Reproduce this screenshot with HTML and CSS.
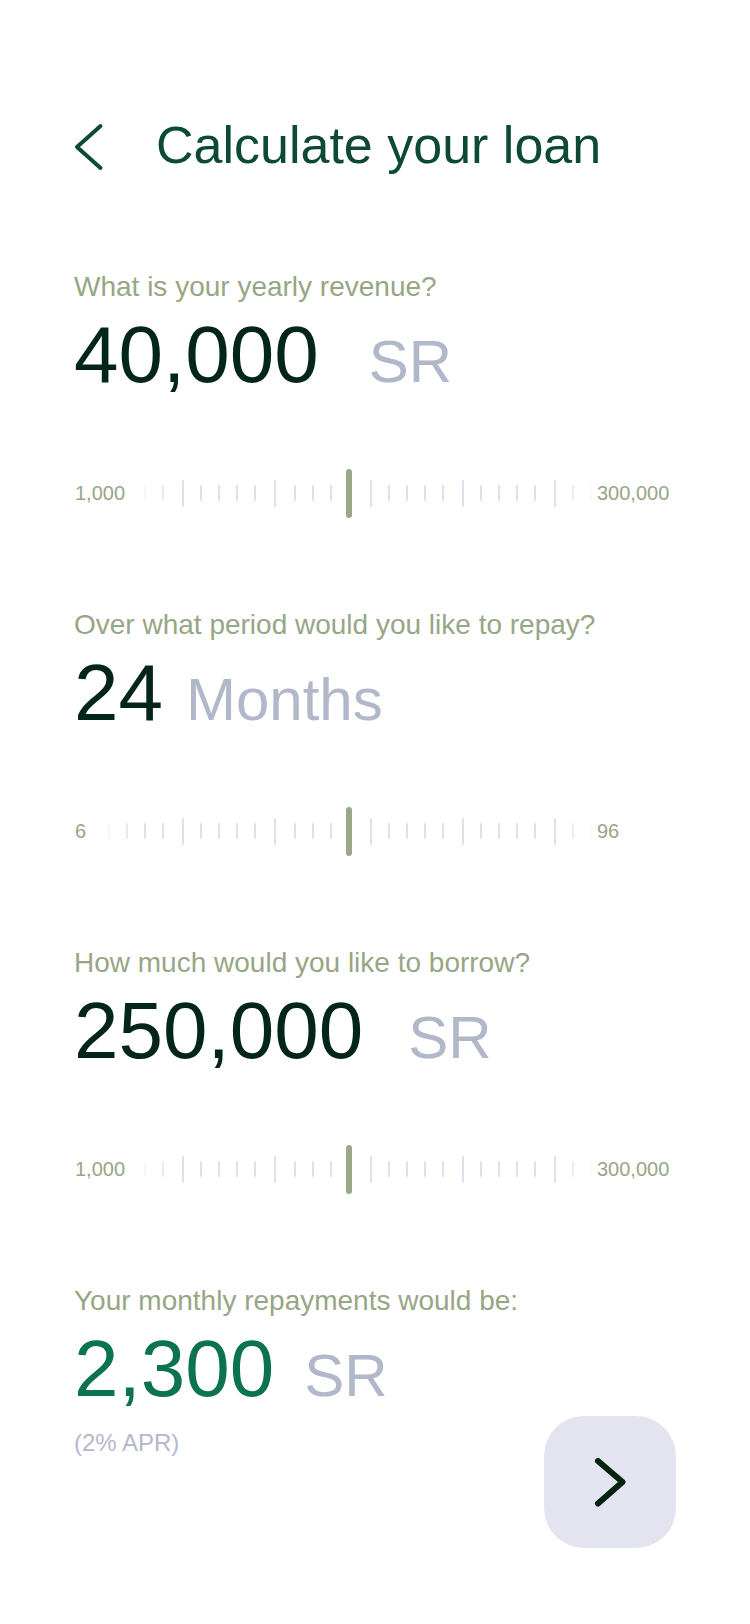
FILE: index.html
```html
<!DOCTYPE html>
<html lang="en">
<head>
<meta charset="utf-8">
<title>Calculate your loan</title>
<link rel="stylesheet" href="styles.css">
</head>
<body>
<main class="screen">
  <header class="header">
    <svg class="back" viewBox="0 0 30 48" aria-hidden="true">
      <path d="M26.5 3 L3 24 L26.5 45" fill="none" stroke="#0d4a33" stroke-width="4" stroke-linecap="round" stroke-linejoin="round"/>
    </svg>
    <h1 class="title">Calculate your loan</h1>
  </header>

  <div class="content">
    <section class="field">
      <p class="question">What is your yearly revenue?</p>
      <div class="value"><span class="amount">40,000</span><span class="unit unit--r1">SR</span></div>
      <div class="slider">
        <span class="slider-min">1,000</span>
        <div class="track">
          <i class="tick"></i><i class="tick"></i><i class="tick"></i><i class="tick"></i><i class="tick"></i><i class="tick"></i>
          <i class="tick tick--major"></i><i class="tick"></i><i class="tick"></i><i class="tick"></i><i class="tick"></i>
          <i class="tick tick--major"></i><i class="tick tick--wide"></i><i class="tick"></i><i class="tick"></i>
          <i class="thumb"></i>
          <i class="tick tick--major"></i><i class="tick"></i><i class="tick"></i><i class="tick"></i><i class="tick"></i>
          <i class="tick tick--major"></i><i class="tick"></i><i class="tick"></i><i class="tick"></i><i class="tick"></i>
          <i class="tick tick--major"></i><i class="tick"></i><i class="tick"></i>
        </div>
        <span class="slider-max">300,000</span>
      </div>
    </section>

    <section class="field">
      <p class="question">Over what period would you like to repay?</p>
      <div class="value"><span class="amount">24</span><span class="unit unit--r2">Months</span></div>
      <div class="slider">
        <span class="slider-min">6</span>
        <div class="track">
          <i class="tick"></i><i class="tick"></i><i class="tick"></i><i class="tick"></i><i class="tick"></i><i class="tick"></i>
          <i class="tick tick--major"></i><i class="tick"></i><i class="tick"></i><i class="tick"></i><i class="tick"></i>
          <i class="tick tick--major"></i><i class="tick tick--wide"></i><i class="tick"></i><i class="tick"></i>
          <i class="thumb"></i>
          <i class="tick tick--major"></i><i class="tick"></i><i class="tick"></i><i class="tick"></i><i class="tick"></i>
          <i class="tick tick--major"></i><i class="tick"></i><i class="tick"></i><i class="tick"></i><i class="tick"></i>
          <i class="tick tick--major"></i><i class="tick"></i><i class="tick"></i>
        </div>
        <span class="slider-max">96</span>
      </div>
    </section>

    <section class="field">
      <p class="question">How much would you like to borrow?</p>
      <div class="value"><span class="amount">250,000</span><span class="unit unit--r3">SR</span></div>
      <div class="slider">
        <span class="slider-min">1,000</span>
        <div class="track">
          <i class="tick"></i><i class="tick"></i><i class="tick"></i><i class="tick"></i><i class="tick"></i><i class="tick"></i>
          <i class="tick tick--major"></i><i class="tick"></i><i class="tick"></i><i class="tick"></i><i class="tick"></i>
          <i class="tick tick--major"></i><i class="tick tick--wide"></i><i class="tick"></i><i class="tick"></i>
          <i class="thumb"></i>
          <i class="tick tick--major"></i><i class="tick"></i><i class="tick"></i><i class="tick"></i><i class="tick"></i>
          <i class="tick tick--major"></i><i class="tick"></i><i class="tick"></i><i class="tick"></i><i class="tick"></i>
          <i class="tick tick--major"></i><i class="tick"></i><i class="tick"></i>
        </div>
        <span class="slider-max">300,000</span>
      </div>
    </section>

    <section class="result">
      <p class="question">Your monthly repayments would be:</p>
      <div class="value value--result"><span class="amount amount--result">2,300</span><span class="unit unit--r4">SR</span></div>
      <div class="result-foot">
        <span class="apr">(2% APR)</span>
        <button class="next" type="button" aria-label="Next">
          <svg class="next-icon" viewBox="0 0 132 132" aria-hidden="true">
            <path d="M54 45 L78.5 66 L54 87.5" fill="none" stroke="#03220f" stroke-width="6" stroke-linecap="round" stroke-linejoin="round"/>
          </svg>
        </button>
      </div>
    </section>
  </div>
</main>
</body>
</html>
```
FILE: styles.css
```css
* {
  box-sizing: border-box;
  margin: 0;
  padding: 0;
}

html,
body {
  background: #ffffff;
}

body {
  width: 750px;
  min-height: 1624px;
  font-family: "Liberation Sans", Arial, sans-serif;
}

.screen {
  padding-top: 119px;
}

.header {
  display: flex;
  align-items: flex-start;
  padding-left: 74px;
}

.back {
  flex: none;
  width: 30px;
  height: 48px;
  margin-top: 4px;
  margin-right: 52px;
}

.title {
  font-size: 52px;
  line-height: 52px;
  font-weight: 400;
  color: #0d4a33;
}

.content {
  padding-top: 102px;
}

.field {
  margin-bottom: 93px;
}

.question {
  padding: 0 74px;
  font-size: 28px;
  line-height: 28px;
  color: #97a684;
  margin-bottom: 14px;
}

.value {
  display: flex;
  align-items: baseline;
  height: 80px;
  padding: 0 74px;
  margin-bottom: 73px;
}

.amount {
  font-size: 80px;
  line-height: 80px;
  color: #03251a;
}

.amount--result {
  color: #0b7350;
}

.unit {
  font-size: 60px;
  line-height: 60px;
  color: #b1b8c9;
}

.unit--r1 { margin-left: 50px; }
.unit--r2 { margin-left: 23px; }
.unit--r3 { margin-left: 45px; }
.unit--r4 { margin-left: 30px; }

.slider {
  display: flex;
  align-items: center;
  height: 50px;
  padding: 0 75px 0 75px;
}

.slider-min,
.slider-max {
  flex: none;
  font-size: 20px;
  line-height: 20px;
  color: #97a684;
}

.slider-min {
  margin-right: 11px;
}

.slider-max {
  width: 78px;
  margin-left: 1px;
}

.track {
  flex: 1;
  min-width: 0;
  height: 50px;
  display: flex;
  justify-content: flex-end;
  align-items: center;
  overflow: hidden;
  padding-right: 4px;
  -webkit-mask-image: linear-gradient(to right, transparent 0, #000 40px, #000 calc(100% - 40px), transparent 100%);
  mask-image: linear-gradient(to right, transparent 0, #000 40px, #000 calc(100% - 40px), transparent 100%);
}

.tick {
  flex: none;
  display: block;
  width: 2px;
  height: 16px;
  margin-left: 16px;
  border-radius: 1px;
  background: #e0dff0;
}

.tick--major {
  height: 27px;
  margin-left: 18px;
}

.tick--wide {
  margin-left: 18px;
}

.thumb {
  flex: none;
  display: block;
  width: 6px;
  height: 49px;
  margin-left: 14px;
  border-radius: 3px;
  background: #99a888;
}

.value--result {
  margin-bottom: 7px;
}

.result-foot {
  display: flex;
  justify-content: space-between;
  align-items: flex-start;
  padding: 0 74px;
}

.apr {
  margin-top: 15px;
  font-size: 24px;
  line-height: 24px;
  color: #b3b8ca;
}

.next {
  flex: none;
  width: 132px;
  height: 132px;
  border: none;
  border-radius: 40px;
  background: #e4e4f1;
  display: flex;
  align-items: center;
  justify-content: center;
  cursor: pointer;
}

.next-icon {
  display: block;
  width: 132px;
  height: 132px;
}
```
